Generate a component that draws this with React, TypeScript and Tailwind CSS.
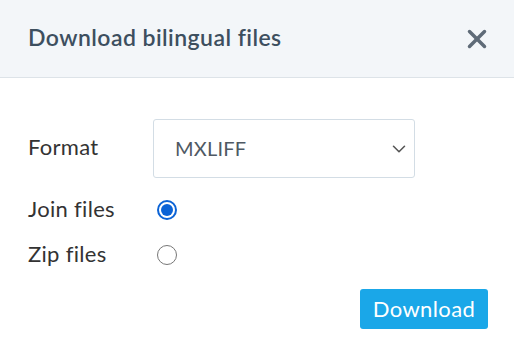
import { X, ChevronDown } from 'lucide-react'

export default function App() {
  return (
    <div className="w-[514px] h-[351px] bg-white font-['Lato','Liberation_Sans',sans-serif]">
      <div className="h-[78px] bg-[#f3f6f9] border-b border-[#dde3e8] flex items-center justify-between pl-[28px] pr-[22px]">
        <h2 className="text-[23px] tracking-[0.45px] font-semibold text-[#3d4f5f] pb-[2px]">Download bilingual files</h2>
        <button className="text-[#5f6b78]">
          <X size={30} strokeWidth={2.8} />
        </button>
      </div>

      <div className="pt-[41px] px-[28px]">
        <div className="flex items-center">
          <label className="w-[125px] text-[22px] tracking-[0.3px] text-[#333] pb-[4px]">Format</label>
          <div className="w-[262px] h-[59px] border border-[#d3dde5] rounded-[3px] flex items-center justify-between pl-[21px] pr-[4px]">
            <span className="text-[20px] tracking-[0.2px] text-[#4f5963] pb-[2px]">MXLIFF</span>
            <ChevronDown size={22} strokeWidth={1.7} className="text-[#555]" />
          </div>
        </div>

        <div className="flex items-center mt-[12px] h-[40px]">
          <span className="w-[129px] text-[22px] tracking-[0.3px] text-[#333] pb-[3px]">Join files</span>
          <span className="w-[20px] h-[20px] rounded-full border-[2px] border-[#0b63d6] flex items-center justify-center">
            <span className="w-[12px] h-[12px] rounded-full bg-[#0b63d6]" />
          </span>
        </div>
        <div className="flex items-center mt-[5px] h-[40px]">
          <span className="w-[129px] text-[22px] tracking-[0.3px] text-[#333] pb-[3px]">Zip files</span>
          <span className="w-[20px] h-[20px] rounded-full border-[1.5px] border-[#777]" />
        </div>

        <div className="flex justify-end mt-[14px]">
          <button className="w-[128px] h-[40px] bg-[#1aa7e8] rounded-[3px] text-white text-[22px] tracking-[0.4px] pb-[2px] mr-[-2px]">
            Download
          </button>
        </div>
      </div>
    </div>
  )
}
